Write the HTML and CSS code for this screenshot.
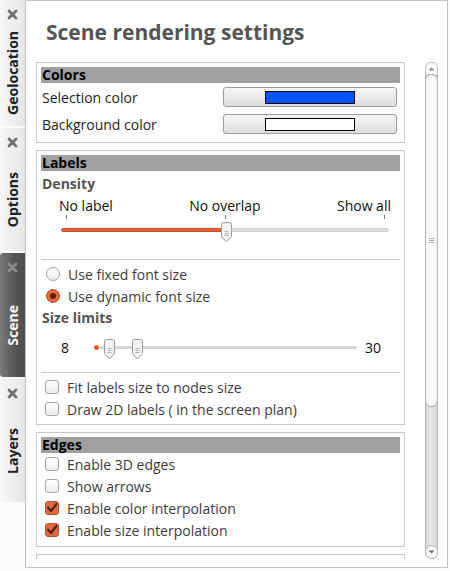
FILE: index.html
```html
<!DOCTYPE html>
<html>
<head>
<meta charset="utf-8">
<link rel="stylesheet" href="styles.css">
</head>
<body>
<div class="app">
  <nav class="tabs">
    <div class="tab tab-geo">
      <svg class="close" width="11" height="11" viewBox="0 0 11 11"><path d="M2 2 L9 9 M9 2 L2 9" stroke="#6e6e6e" stroke-width="2.8" stroke-linecap="round"/></svg>
      <div class="tab-body"><span class="tab-label">Geolocation</span></div>
    </div>
    <div class="tab tab-opt">
      <svg class="close" width="11" height="11" viewBox="0 0 11 11"><path d="M2 2 L9 9 M9 2 L2 9" stroke="#6e6e6e" stroke-width="2.8" stroke-linecap="round"/></svg>
      <div class="tab-body"><span class="tab-label">Options</span></div>
    </div>
    <div class="tab tab-scene active">
      <svg class="close" width="11" height="11" viewBox="0 0 11 11"><path d="M2 2 L9 9 M9 2 L2 9" stroke="#8a8a8a" stroke-width="2.8" stroke-linecap="round"/></svg>
      <div class="tab-body"><span class="tab-label">Scene</span></div>
    </div>
    <div class="tab tab-layers">
      <svg class="close" width="11" height="11" viewBox="0 0 11 11"><path d="M2 2 L9 9 M9 2 L2 9" stroke="#6e6e6e" stroke-width="2.8" stroke-linecap="round"/></svg>
      <div class="tab-body"><span class="tab-label">Layers</span></div>
    </div>
  </nav>

  <main class="panel">
    <h1 class="title">Scene rendering settings</h1>
    <div class="scroll">
      <div class="content">
        <section class="group group-colors">
          <div class="group-header">Colors</div>
          <div class="color-row">
            <span class="color-label">Selection color</span>
            <button class="color-btn"><span class="swatch swatch-blue"></span></button>
          </div>
          <div class="color-row">
            <span class="color-label">Background color</span>
            <button class="color-btn"><span class="swatch swatch-white"></span></button>
          </div>
        </section>

        <section class="group group-labels">
          <div class="group-header">Labels</div>
          <div class="sub-title">Density</div>
          <div class="density-labels">
            <span>No label</span>
            <span>No overlap</span>
            <span>Show all</span>
          </div>
          <div class="ticks"><i></i><i></i><i></i></div>
          <div class="groove">
            <div class="groove-fill"></div>
            <svg class="handle handle-density" width="13" height="23" viewBox="0 0 13 23"><path d="M1.5 3.5 a2 2 0 0 1 2 -2 h6 a2 2 0 0 1 2 2 v12 l-5 5.5 l-5 -5.5 z" fill="#f3f3f3" stroke="#9a9a9a"/><path d="M4.5 10.5 h4 M4.5 12.5 h4 M4.5 14.5 h4" stroke="#b0b0b0"/></svg>
          </div>
          <div class="sep sep-1"></div>
          <div class="opt">
            <span class="radio"></span>
            <span class="opt-text">Use fixed font size</span>
          </div>
          <div class="opt">
            <span class="radio checked"></span>
            <span class="opt-text">Use dynamic font size</span>
          </div>
          <div class="sub-title sub-size">Size limits</div>
          <div class="range">
            <span class="range-min">8</span>
            <div class="range-track">
              <span class="range-dot"></span>
              <div class="range-groove"></div>
              <svg class="handle handle-a" width="13" height="23" viewBox="0 0 13 23"><path d="M1.5 3.5 a2 2 0 0 1 2 -2 h6 a2 2 0 0 1 2 2 v12 l-5 5.5 l-5 -5.5 z" fill="#f3f3f3" stroke="#9a9a9a"/><path d="M4.5 10.5 h4 M4.5 12.5 h4 M4.5 14.5 h4" stroke="#b0b0b0"/></svg>
              <svg class="handle handle-b" width="13" height="23" viewBox="0 0 13 23"><path d="M1.5 3.5 a2 2 0 0 1 2 -2 h6 a2 2 0 0 1 2 2 v12 l-5 5.5 l-5 -5.5 z" fill="#f3f3f3" stroke="#9a9a9a"/><path d="M4.5 10.5 h4 M4.5 12.5 h4 M4.5 14.5 h4" stroke="#b0b0b0"/></svg>
            </div>
            <span class="range-max">30</span>
          </div>
          <div class="sep sep-2"></div>
          <div class="opt">
            <span class="check"></span>
            <span class="opt-text">Fit labels size to nodes size</span>
          </div>
          <div class="opt">
            <span class="check"></span>
            <span class="opt-text">Draw 2D labels ( in the screen plan)</span>
          </div>
        </section>

        <section class="group group-edges">
          <div class="group-header">Edges</div>
          <div class="opt">
            <span class="check"></span>
            <span class="opt-text">Enable 3D edges</span>
          </div>
          <div class="opt">
            <span class="check"></span>
            <span class="opt-text">Show arrows</span>
          </div>
          <div class="opt">
            <span class="check checked"><svg width="14" height="14" viewBox="0 0 14 14"><path d="M3 6.5 L6 10 L11.5 3" fill="none" stroke="#4a2418" stroke-width="2.2" stroke-linecap="round" stroke-linejoin="round"/></svg></span>
            <span class="opt-text">Enable color interpolation</span>
          </div>
          <div class="opt">
            <span class="check checked"><svg width="14" height="14" viewBox="0 0 14 14"><path d="M3 6.5 L6 10 L11.5 3" fill="none" stroke="#4a2418" stroke-width="2.2" stroke-linecap="round" stroke-linejoin="round"/></svg></span>
            <span class="opt-text">Enable size interpolation</span>
          </div>
        </section>

        <section class="group group-next"></section>
      </div>

      <div class="scrollbar">
        <div class="sb-up"><svg width="7" height="4" viewBox="0 0 7 4"><path d="M0.5 3.5 L3.5 0.5 L6.5 3.5 z" fill="#8a8a8a"/></svg></div>
        <div class="sb-handle"><span class="grip"></span></div>
        <div class="sb-track"></div>
        <div class="sb-down"><svg width="7" height="4" viewBox="0 0 7 4"><path d="M0.5 0.5 L3.5 3.5 L6.5 0.5 z" fill="#6a6a6a"/></svg></div>
      </div>
    </div>
  </main>
</div>
</body>
</html>
```

FILE: styles.css
```css
* { box-sizing: border-box; }

html, body {
  margin: 0;
  padding: 0;
}

body {
  width: 450px;
  height: 571px;
  background: #fbfbfb;
  font-family: "Open Sans", "DejaVu Sans", sans-serif;
  font-size: 14px;
  color: #3c3c3c;
  overflow: hidden;
}

.app {
  display: flex;
  width: 450px;
  height: 571px;
}

/* ---------- tabs ---------- */
.tabs {
  width: 25px;
  display: flex;
  flex-direction: column;
  gap: 2px;
  flex: none;
}

.tab {
  display: flex;
  flex-direction: column;
  align-items: center;
  background: linear-gradient(to right, #f6f6f6, #e6e6e6);
  border-radius: 3px 0 0 3px;
}

.tab-geo { height: 126px; }
.tab-opt { height: 123px; }
.tab-scene { height: 124px; }
.tab-layers { height: 123px; }

.tab.active {
  background: linear-gradient(to right, #7a7a7a, #545454 60%, #4e4e4e);
}

.close {
  margin-top: 9px;
  flex: none;
}

.tab-body {
  flex: 1;
  display: flex;
  align-items: center;
  justify-content: center;
}

.tab-label {
  writing-mode: vertical-rl;
  transform: rotate(180deg);
  font-weight: bold;
  font-size: 14px;
  color: #222;
  line-height: 16px;
}

.tab.active .tab-label {
  color: #f4f4f4;
}

/* ---------- panel ---------- */
.panel {
  width: 423px;
  height: 568px;
  background: #fff;
  border: 1px solid #c3c3c3;
  display: flex;
  flex-direction: column;
}

.title {
  margin: 0;
  padding: 19px 0 0 20px;
  height: 61px;
  font-size: 21px;
  line-height: 24px;
  font-weight: bold;
  color: #555;
}

.scroll {
  display: flex;
  padding-left: 10px;
  height: 497px;
  overflow: hidden;
}

.content {
  width: 369px;
  display: flex;
  flex-direction: column;
  gap: 7px;
  flex: none;
}

.group {
  border: 1px solid #c8c8c8;
  padding: 4px;
  flex: none;
}

.group-header {
  height: 16px;
  background: #a0a0a0;
  color: #000;
  font-weight: bold;
  font-size: 14px;
  line-height: 16px;
  padding-left: 1px;
}

/* colors */
.group-colors { padding-bottom: 8px; }

.color-row {
  display: flex;
  align-items: center;
  height: 20px;
  margin-top: 4px;
}

.color-row + .color-row { margin-top: 7px; }

.color-label {
  padding-left: 1px;
  color: #1e1e1e;
}

.color-btn {
  margin-left: auto;
  margin-right: 3px;
  width: 174px;
  height: 20px;
  border: 1px solid #9d9d9d;
  border-radius: 3px;
  background: linear-gradient(#f6f6f6, #dedede);
  padding: 0;
  display: flex;
  align-items: center;
  justify-content: center;
}

.swatch {
  width: 90px;
  height: 13px;
  border: 1px solid #000;
}

.swatch-blue { background: #0055ff; }
.swatch-white { background: #fff; }

/* labels */
.sub-title {
  font-weight: bold;
  color: #555;
  line-height: 18px;
  height: 18px;
  margin-top: 4px;
  padding-left: 1px;
}

.sub-size { margin-top: 2px; }

.density-labels {
  display: flex;
  justify-content: space-between;
  margin-top: 4px;
  padding: 0 9px 0 18px;
  line-height: 18px;
  height: 18px;
  color: #111;
}

.ticks {
  display: flex;
  justify-content: space-between;
  height: 4px;
  margin: 0 15px 0 25px;
}

.ticks i {
  width: 1px;
  height: 4px;
  background: #777;
}

.groove {
  position: relative;
  margin: 9px 11px 0 20px;
  height: 4px;
  background: #dcdcdc;
  border: 1px solid #cfcfcf;
  border-radius: 2px;
}

.groove-fill {
  width: 165px;
  height: 4px;
  margin: -1px 0 0 -1px;
  background: #e4622f;
  border: 1px solid #c9502a;
  border-radius: 2px;
}

.handle {
  position: absolute;
}

.handle-density {
  left: 158px;
  top: -8px;
}

.sep {
  height: 1px;
  background: #d0d0d0;
}

.sep-1 { margin: 27px 0 3px; }
.sep-2 { margin: 10px 0 3px; }

.opt {
  display: flex;
  align-items: center;
  height: 22px;
  padding-left: 4px;
  gap: 8px;
}

.opt-text { color: #3c3c3c; }

.radio {
  width: 14px;
  height: 14px;
  border-radius: 50%;
  border: 1px solid #a6a6a6;
  background: linear-gradient(#fff, #ededed);
  margin-left: 1px;
  display: flex;
  align-items: center;
  justify-content: center;
}

.radio.checked {
  background: #e4683f;
  border-color: #b9532f;
}

.radio.checked::after {
  content: "";
  width: 6px;
  height: 6px;
  border-radius: 50%;
  background: #5a2414;
}

.check {
  width: 14px;
  height: 14px;
  border: 1px solid #a6a6a6;
  border-radius: 3px;
  background: linear-gradient(#fff, #ededed);
  display: flex;
  align-items: center;
  justify-content: center;
  position: relative;
}

.check.checked {
  background: #e2683f;
  border-color: #b9532f;
}

.check svg {
  position: absolute;
  left: -1px;
  top: -1px;
}

.range {
  display: flex;
  align-items: center;
  height: 30px;
  margin-top: 5px;
}

.range-min {
  margin-left: 20px;
  width: 8px;
  color: #111;
}

.range-track {
  position: relative;
  margin-left: 25px;
  width: 263px;
  height: 5px;
  display: flex;
  align-items: center;
}

.range-dot {
  width: 5px;
  height: 5px;
  border-radius: 50%;
  background: #e4622f;
  flex: none;
}

.range-groove {
  flex: 1;
  height: 3px;
  background: #d6d6d6;
  border-radius: 2px;
}

.handle-a { left: 9px; top: -7px; }
.handle-b { left: 37px; top: -7px; }

.range-max {
  margin-left: 8px;
  color: #111;
}

/* edges */
.group-edges { padding-bottom: 5px; }

.group-next {
  height: 20px;
  border-bottom: none;
}

/* scrollbar */
.scrollbar {
  width: 13px;
  margin-left: 20px;
  height: 497px;
  display: flex;
  flex-direction: column;
  border: 1px solid #b8b8b8;
  border-radius: 6px;
  background: linear-gradient(to right, #d8d8d8, #e6e6e6, #d8d8d8);
  overflow: hidden;
  flex: none;
}

.sb-up {
  height: 11px;
  background: linear-gradient(to right, #f6f6f6, #fff);
  display: flex;
  justify-content: center;
  align-items: center;
  flex: none;
}

.sb-handle {
  height: 333px;
  margin: 0 -1px;
  border: 1px solid #a8a8a8;
  border-radius: 6px;
  background: linear-gradient(to right, #f4f4f4, #fefefe 50%, #f0f0f0);
  display: flex;
  align-items: center;
  justify-content: center;
  flex: none;
}

.grip {
  width: 5px;
  height: 5px;
  border-top: 1px solid #aaa;
  border-bottom: 1px solid #aaa;
  position: relative;
}

.grip::after {
  content: "";
  position: absolute;
  left: 0;
  right: 0;
  top: 1px;
  height: 1px;
  background: #aaa;
}

.sb-track { flex: 1; }

.sb-down {
  height: 14px;
  margin: 0 -1px -1px;
  border: 1px solid #b0b0b0;
  border-radius: 6px 6px 6px 6px;
  background: linear-gradient(to right, #f4f4f4, #fff);
  display: flex;
  justify-content: center;
  align-items: center;
  flex: none;
}
```
